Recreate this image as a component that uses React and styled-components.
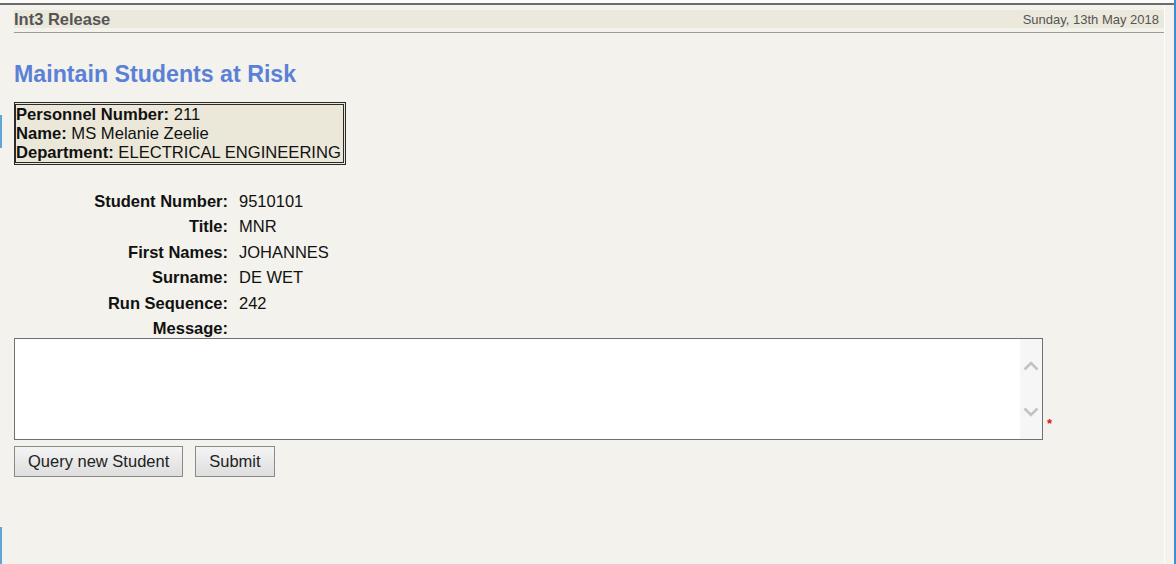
import React from 'react';
import styled, { createGlobalStyle } from 'styled-components';

const GlobalStyle = createGlobalStyle`
  html, body {
    margin: 0;
    padding: 0;
    background-color: #f3f2ec;
    font-family: 'Liberation Sans', Arial, sans-serif;
  }
`;

const Window = styled.div`
  position: relative;
  height: 564px;
  box-sizing: border-box;
  padding-top: 3px;
  background-color: #fbfbfa;
  border-right: 2px solid #3d8fcf;
  overflow: hidden;
`;

const Frame = styled.div`
  height: 100%;
  box-sizing: border-box;
  border-top: 2px solid #6c6c6c;
  background-color: #f3f2ec;
`;

const Content = styled.div`
  width: 1165px;
  height: 100%;
  box-sizing: border-box;
  padding: 5px 0 0 14px;
  border-right: 1px solid #fdfdfc;
`;

const EdgeMark = styled.div`
  position: absolute;
  left: 0;
  top: ${(p) => p.top}px;
  width: 2px;
  height: ${(p) => p.len}px;
  background-color: #5fa6d6;
`;

const Header = styled.div`
  display: flex;
  justify-content: space-between;
  align-items: center;
  height: 18px;
  padding-right: 5px;
  background-color: #ebe8dc;
  color: #555;
`;

const Release = styled.span`
  font-size: 16.5px;
  font-weight: bold;
`;

const DateText = styled.span`
  font-size: 13px;
`;

const HeaderRule = styled.div`
  margin-top: 4px;
  height: 1px;
  background-color: #9a9a9a;
`;

const Title = styled.h1`
  margin: 25px 0 0;
  font-size: 23.2px;
  line-height: 32px;
  font-weight: bold;
  color: #5b80d7;
`;

const InfoBox = styled.div`
  display: inline-block;
  margin-top: 12px;
  padding: 0 2px 0 0;
  border: 3px double #2a2a2a;
  border-left-width: 2px;
  background-color: #ebe8d9;
  font-size: 16.6px;
  line-height: 19px;
  color: #111;
`;

const InfoLine = styled.div`
  white-space: nowrap;
`;

const Fields = styled.div`
  display: grid;
  grid-template-columns: 214px auto;
  column-gap: 11px;
  margin-top: 24px;
  font-size: 16.5px;
  line-height: 25.4px;
  color: #111;
`;

const Label = styled.div`
  text-align: right;
  font-weight: bold;
`;

const Value = styled.div``;

const MessageRow = styled.div`
  display: flex;
  align-items: flex-end;
  gap: 4px;
  margin-top: -3px;
`;

const MessageBox = styled.div`
  display: flex;
  width: 1029px;
  height: 102px;
  box-sizing: border-box;
  border: 1px solid #707070;
  background-color: #fff;
`;

const TextArea = styled.textarea`
  flex: 1;
  border: none;
  outline: none;
  resize: none;
  padding: 2px;
  font-family: 'Liberation Sans', Arial, sans-serif;
  font-size: 14px;
  background: transparent;
`;

const ScrollTrack = styled.div`
  display: flex;
  flex-direction: column;
  justify-content: space-between;
  align-items: center;
  width: 22px;
  padding: 22px 0 22px;
  box-sizing: border-box;
  background-color: #f6f6f6;
`;

const Required = styled.span`
  margin-bottom: 10px;
  color: #e01010;
  font-size: 13px;
  font-weight: bold;
  line-height: 12px;
`;

const Buttons = styled.div`
  display: flex;
  gap: 12px;
  margin-top: 6px;
`;

const Button = styled.button`
  height: 31px;
  padding: 0 ${(p) => p.pad}px;
  border: 1px solid #8a8a8a;
  border-radius: 0;
  background: linear-gradient(#f4f4f4, #dedede);
  font-family: 'Liberation Sans', Arial, sans-serif;
  font-size: 16.5px;
  color: #222;
  cursor: pointer;
`;

const Chevron = ({ up }) => (
  <svg width="16" height="10" viewBox="0 0 16 10">
    <path
      d={up ? 'M1.5 8.5 L8 2 L14.5 8.5' : 'M1.5 1.5 L8 8 L14.5 1.5'}
      fill="none"
      stroke="#c3c3c3"
      strokeWidth="2.6"
    />
  </svg>
);

const fields = [
  ['Student Number:', '9510101'],
  ['Title:', 'MNR'],
  ['First Names:', 'JOHANNES'],
  ['Surname:', 'DE WET'],
  ['Run Sequence:', '242'],
  ['Message:', ''],
];

export default function App() {
  return (
    <>
      <GlobalStyle />
      <Window>
        <EdgeMark top={115} len={33} />
        <EdgeMark top={527} len={40} />
        <Frame>
          <Content>
            <Header>
              <Release>Int3 Release</Release>
              <DateText>Sunday, 13th May 2018</DateText>
            </Header>
            <HeaderRule />
            <Title>Maintain Students at Risk</Title>
            <InfoBox>
              <InfoLine><b>Personnel Number:</b> 211</InfoLine>
              <InfoLine><b>Name:</b> MS Melanie Zeelie</InfoLine>
              <InfoLine><b>Department:</b> ELECTRICAL ENGINEERING</InfoLine>
            </InfoBox>
            <Fields>
              {fields.map(([label, value]) => (
                <React.Fragment key={label}>
                  <Label>{label}</Label>
                  <Value>{value}</Value>
                </React.Fragment>
              ))}
            </Fields>
            <MessageRow>
              <MessageBox>
                <TextArea />
                <ScrollTrack>
                  <Chevron up />
                  <Chevron />
                </ScrollTrack>
              </MessageBox>
              <Required>*</Required>
            </MessageRow>
            <Buttons>
              <Button pad={13}>Query new Student</Button>
              <Button pad={13}>Submit</Button>
            </Buttons>
          </Content>
        </Frame>
      </Window>
    </>
  );
}
